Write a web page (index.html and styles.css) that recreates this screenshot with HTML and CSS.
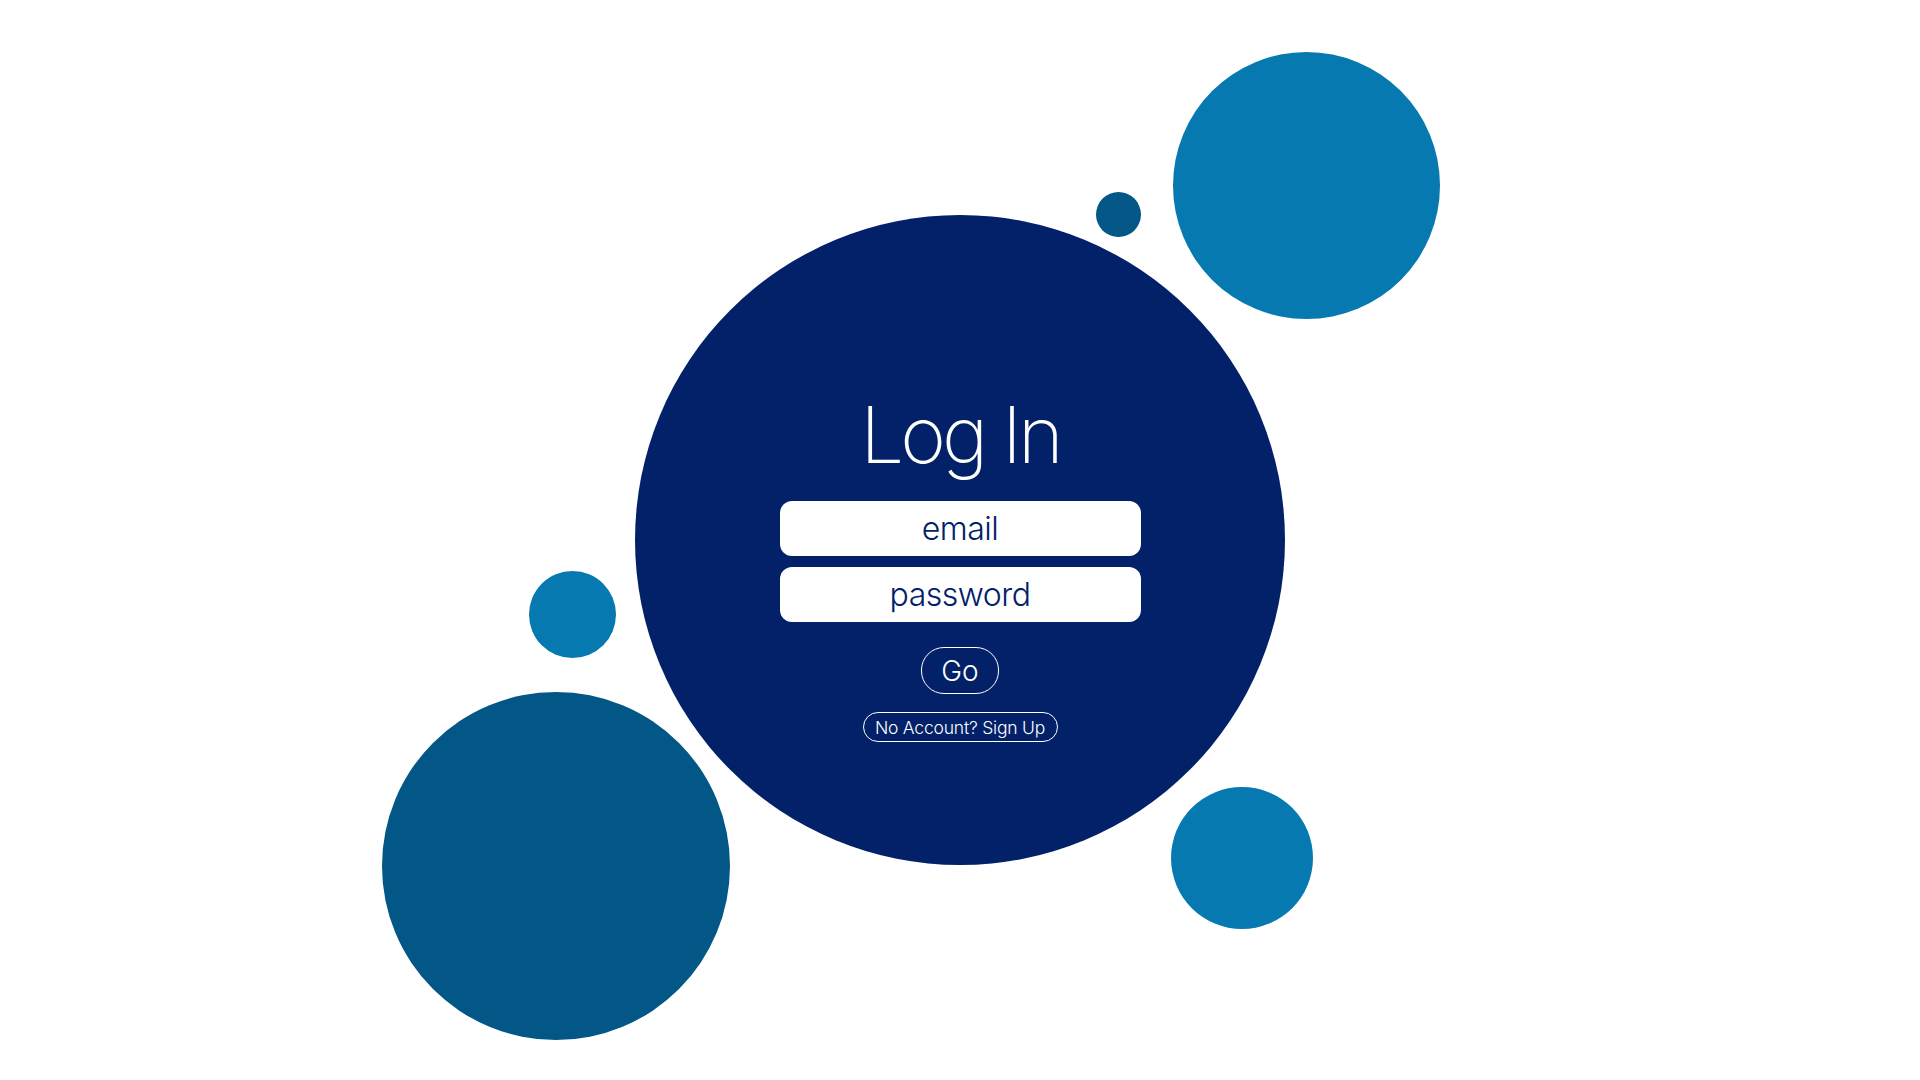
FILE: index.html
```html
<!DOCTYPE html>
<html lang="en">
<head>
  <meta charset="UTF-8">
  <meta name="viewport" content="width=device-width, initial-scale=1.0">
  <title>Log In</title>
  <link rel="stylesheet" href="styles.css">
</head>
<body>
  <div class="page">
    <!-- background bubbles -->
    <div class="bubble bubble-top-big"></div>
    <div class="bubble bubble-top-small"></div>
    <div class="bubble bubble-left-small"></div>
    <div class="bubble bubble-left-big"></div>
    <div class="bubble bubble-right"></div>

    <div class="login">
      <h1>Log In</h1>
      <form class="login-form">
        <input type="text" class="field" placeholder="email">
        <input type="password" class="field" placeholder="password">
        <button type="button" class="go-btn">Go</button>
        <button type="button" class="signup-btn">No Account? Sign Up</button>
      </form>
    </div>
  </div>
</body>
</html>
```

FILE: styles.css
```css
* {
  box-sizing: border-box;
}

body {
  margin: 0;
  padding: 0;
  background: #ffffff;
  font-family: Inter, "Open Sans", sans-serif;
  overflow: hidden;
}

.page {
  position: relative;
  width: 100vw;
  height: 100vh;
  display: flex;
  align-items: center;
  justify-content: center;
}

.bubble {
  position: absolute;
  border-radius: 50%;
}

.bubble-top-big {
  left: 1173px;
  top: 52px;
  width: 267px;
  height: 267px;
  background: #0779b1;
}

.bubble-top-small {
  left: 1096px;
  top: 192px;
  width: 45px;
  height: 45px;
  background: #025786;
}

.bubble-left-small {
  left: 529px;
  top: 571px;
  width: 87px;
  height: 87px;
  background: #0779b1;
}

.bubble-left-big {
  left: 382px;
  top: 692px;
  width: 348px;
  height: 348px;
  background: #025786;
}

.bubble-right {
  left: 1171px;
  top: 787px;
  width: 142px;
  height: 142px;
  background: #0779b1;
}

.login {
  position: relative;
  width: 650px;
  height: 650px;
  border-radius: 50%;
  background: #022169;
  display: flex;
  flex-direction: column;
  align-items: center;
  justify-content: center;
  padding-top: 58px;
  color: #ffffff;
}

.login h1 {
  margin: 0 0 27px;
  font-size: 78px;
  line-height: 1;
  font-weight: 200;
  letter-spacing: -4px;
}

.login-form {
  display: flex;
  flex-direction: column;
  align-items: center;
}

.field {
  width: 361px;
  height: 55px;
  margin-bottom: 11px;
  border: none;
  border-radius: 12px;
  background: #ffffff;
  text-align: center;
  font-family: inherit;
  font-size: 32px;
  font-weight: 300;
  letter-spacing: -0.5px;
  color: #022169;
}

.field::placeholder {
  color: #022169;
  opacity: 1;
}

.go-btn {
  margin-top: 14px;
  width: 78px;
  height: 47px;
  padding: 0;
  border: 1px solid #ffffff;
  border-radius: 23px;
  background: transparent;
  color: #ffffff;
  font-family: inherit;
  font-size: 28px;
  font-weight: 300;
  cursor: pointer;
}

.signup-btn {
  margin-top: 18px;
  width: 195px;
  height: 30px;
  padding: 0;
  border: 1px solid #ffffff;
  border-radius: 15px;
  background: transparent;
  color: #ffffff;
  font-family: inherit;
  font-size: 17.5px;
  font-weight: 300;
  letter-spacing: -0.2px;
  cursor: pointer;
}
```
